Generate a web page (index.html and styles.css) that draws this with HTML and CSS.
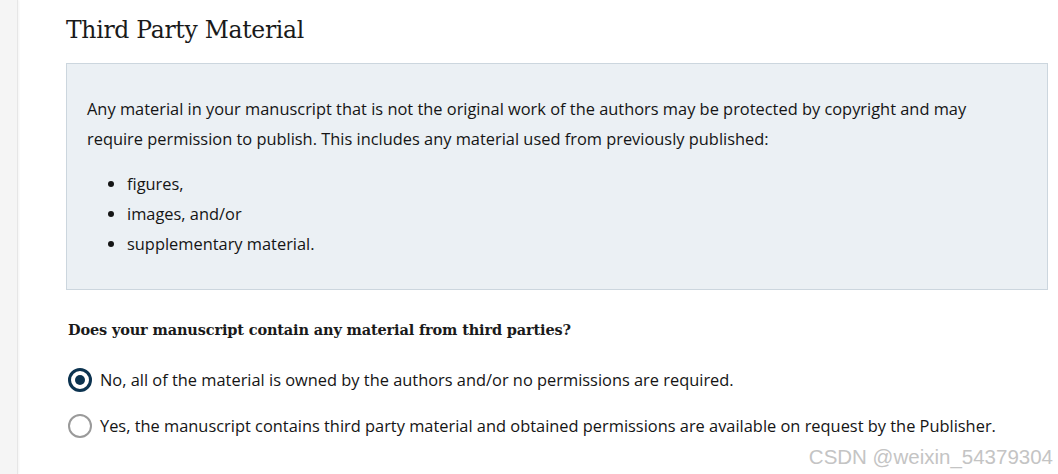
FILE: index.html
```html
<!DOCTYPE html>
<html>
<head>
<meta charset="utf-8">
<link rel="stylesheet" href="styles.css">
</head>
<body>
<div class="page">
  <aside class="rail"></aside>
  <main class="main">
    <h2 class="title">Third Party Material</h2>
    <div class="info">
      <p class="info-text">Any material in your manuscript that is not the original work of the authors may be protected by copyright and may require permission to publish. This includes any material used from previously published:</p>
      <ul class="info-list">
        <li>figures,</li>
        <li>images, and/or</li>
        <li>supplementary material.</li>
      </ul>
    </div>
    <h3 class="question">Does your manuscript contain any material from third parties?</h3>
    <div class="options">
      <label class="option"><span class="radio checked"></span><span class="label">No, all of the material is owned by the authors and/or no permissions are required.</span></label>
      <label class="option"><span class="radio"></span><span class="label">Yes, the manuscript contains third party material and obtained permissions are available on request by the Publisher.</span></label>
    </div>
  </main>
  <div class="watermark">CSDN @weixin_54379304</div>
</div>
</body>
</html>
```

FILE: styles.css
```css
* { box-sizing: border-box; }
html, body { margin: 0; padding: 0; background: #fff; }
body { width: 1058px; height: 474px; overflow: hidden; }
.page { position: relative; display: flex; height: 474px; }
.rail {
  width: 18px;
  flex: none;
  background: #f5f5f5;
  border-right: 1px solid #e6e6e6;
  box-shadow: 1px 0 2px rgba(0,0,0,0.05);
}
.main {
  flex: 1;
  padding: 14px 10px 0 48px;
  color: #1a1a1a;
}
.title {
  margin: 0;
  font-family: "DejaVu Serif", serif;
  font-weight: normal;
  font-size: 23.5px;
  line-height: 32px;
  color: #1a1a1a;
  letter-spacing: -0.3px;
}
.info {
  margin-top: 17px;
  width: 982px;
  background: #ebf0f4;
  border: 1px solid #ccd6de;
  padding: 30px 60px 30px 20px;
  font-family: "Open Sans", "Liberation Sans", sans-serif;
  font-size: 16.4px;
  line-height: 30px;
  color: #151515;
}
.info-text { margin: 0; }
.info-list { margin: 15px 0 0 0; padding-left: 40px; }
.question {
  margin: 28px 0 0 2px;
  font-family: "DejaVu Serif", serif;
  font-weight: bold;
  font-size: 14.5px;
  line-height: 24px;
  letter-spacing: -0.15px;
  color: #1a1a1a;
}
.options { margin-top: 26px; display: flex; flex-direction: column; gap: 22px; }
.option {
  display: flex;
  align-items: center;
  gap: 8px;
  margin-left: 2px;
  font-family: "Open Sans", "Liberation Sans", sans-serif;
  font-size: 16.4px;
  line-height: 24px;
  color: #151515;
}
.radio {
  width: 24px; height: 24px; flex: none;
  border-radius: 50%;
  border: 2px solid #9a9a9a;
  background: #fff;
  position: relative;
}
.radio.checked { border: 3px solid #0c3350; }
.radio.checked::after {
  content: "";
  position: absolute;
  left: 4px; top: 4px;
  width: 10px; height: 10px;
  border-radius: 50%;
  background: #0c3350;
}
.watermark {
  position: absolute;
  right: 5px;
  bottom: 5px;
  font-family: "Liberation Sans", sans-serif;
  font-size: 20.5px;
  color: #c4c4c4;
}
```
